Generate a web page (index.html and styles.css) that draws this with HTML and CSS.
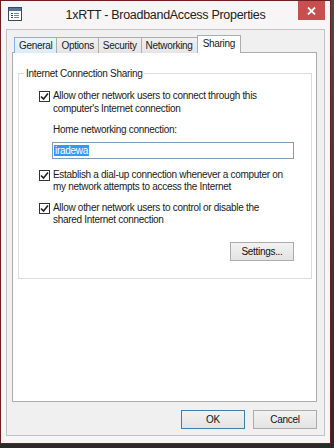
FILE: index.html
```
<!DOCTYPE html>
<html lang="en">
<head>
  <meta charset="UTF-8">
  <meta name="viewport" content="width=device-width, initial-scale=1.0">
  <title>1xRTT - BroadbandAccess Properties</title>
  <link rel="stylesheet" href="styles.css">
</head>
<body>
  <div class="window">
    <div class="titlebar">
      <svg class="app-icon" width="14" height="14" viewBox="0 0 14 14">
        <rect x="0.5" y="0.5" width="13" height="13" fill="#fff" stroke="#3b4a5c"/>
        <rect x="1" y="1" width="12" height="3" fill="#58769a"/>
        <rect x="3" y="6" width="2" height="1" fill="#3b4a5c"/>
        <rect x="6" y="6" width="5" height="1" fill="#7a8899"/>
        <rect x="3" y="8" width="2" height="1" fill="#3b4a5c"/>
        <rect x="6" y="8" width="5" height="1" fill="#7a8899"/>
        <rect x="3" y="10" width="2" height="1" fill="#3b4a5c"/>
        <rect x="6" y="10" width="5" height="1" fill="#7a8899"/>
      </svg>
      <div class="title">1xRTT - BroadbandAccess Properties</div>
      <div class="close">
        <svg width="9" height="8" viewBox="0 0 9 8">
          <path d="M1 0.5 L8 7.5 M8 0.5 L1 7.5" stroke="#fff" stroke-width="1.8"/>
        </svg>
      </div>
    </div>

    <div class="client">
      <div class="tabs">
        <div class="tab tab-hover">General</div>
        <div class="tab">Options</div>
        <div class="tab">Security</div>
        <div class="tab">Networking</div>
        <div class="tab tab-active">Sharing</div>
      </div>

      <div class="panel">
        <fieldset class="group">
          <legend>Internet Connection Sharing</legend>

          <div class="check-row">
            <span class="checkbox"><svg width="9" height="9" viewBox="0 0 9 9"><path d="M1 4.5 L3.5 7 L8 1.5" fill="none" stroke="#222" stroke-width="1.6"/></svg></span>
            <span class="check-text">Allow other network users to connect through this<br>computer's Internet connection</span>
          </div>

          <div class="field">
            <div class="field-label">Home networking connection:</div>
            <div class="text-input"><span class="selected">iradewa</span></div>
          </div>

          <div class="check-row">
            <span class="checkbox"><svg width="9" height="9" viewBox="0 0 9 9"><path d="M1 4.5 L3.5 7 L8 1.5" fill="none" stroke="#222" stroke-width="1.6"/></svg></span>
            <span class="check-text">Establish a dial-up connection whenever a computer on<br>my network attempts to access the Internet</span>
          </div>

          <div class="check-row check-row-tight">
            <span class="checkbox"><svg width="9" height="9" viewBox="0 0 9 9"><path d="M1 4.5 L3.5 7 L8 1.5" fill="none" stroke="#222" stroke-width="1.6"/></svg></span>
            <span class="check-text">Allow other network users to control or disable the<br>shared Internet connection</span>
          </div>

          <div class="group-actions">
            <button class="btn">Settings...</button>
          </div>
        </fieldset>
      </div>

      <div class="actions">
        <button class="btn btn-default">OK</button>
        <button class="btn">Cancel</button>
      </div>
    </div>
  </div>
</body>
</html>
```

FILE: styles.css
```
* {
  box-sizing: border-box;
}

body {
  margin: 0;
  width: 334px;
  height: 448px;
  background: linear-gradient(to bottom, #4a4a4a, #2a2a2a);
  font-family: "Liberation Sans", Arial, sans-serif;
  font-size: 10px;
  letter-spacing: -0.3px;
  color: #1a1a1a;
  overflow: hidden;
}

.window {
  width: 331px;
  height: 444px;
  border: 1px solid #6e1e1e;
  background: #f7f5f6;
  display: flex;
  flex-direction: column;
}

/* Title bar */
.titlebar {
  height: 28px;
  flex-shrink: 0;
  display: grid;
  grid-template-columns: 1fr auto 1fr;
  align-items: center;
}

.app-icon {
  margin: 0 0 2px 7px;
}

.title {
  font-size: 12.5px;
  letter-spacing: -0.3px;
  color: #222;
  padding-bottom: 1px;
}

.close {
  justify-self: end;
  align-self: start;
  width: 27px;
  height: 19px;
  margin-right: 5px;
  background: #c74f4f;
  display: flex;
  align-items: center;
  justify-content: center;
}

/* Client area */
.client {
  flex: 1;
  margin: 0 5px 7px 5px;
  border: 1px solid #c2c2c2;
  background: #f0f0f0;
  padding: 5px 7px 6px 5px;
  display: flex;
  flex-direction: column;
}

.tabs {
  display: flex;
  align-items: flex-end;
  height: 18px;
  padding-left: 2px;
  margin-bottom: -1px;
  position: relative;
  z-index: 1;
}

.tab {
  height: 16px;
  padding: 0 4px;
  border: 1px solid #adadad;
  border-bottom: none;
  background: linear-gradient(#f0f0f0, #e5e5e5);
  line-height: 15px;
  margin-right: -1px;
}

.tab-hover {
  background: linear-gradient(#ecf4fc, #dcecfc);
  border-color: #7eb4ea;
}

.tab-active {
  height: 18px;
  padding: 0 5px;
  background: #fff;
  line-height: 15px;
}

.panel {
  flex: 1;
  background: #fff;
  border: 1px solid #adadad;
  padding: 14px 4px 0 5px;
}

/* Group box */
.group {
  margin: 0;
  border: 1px solid #dcdcdc;
  padding: 0 17px 17px 20px;
}

.group legend {
  padding: 0 2px;
  margin-left: -15px;
  line-height: 13px;
}

.check-row {
  display: flex;
  align-items: flex-start;
  gap: 3px;
  margin-top: 10px;
  line-height: 12.5px;
}

.check-row-tight {
  margin-top: 8px;
}

.checkbox {
  width: 11px;
  height: 11px;
  border: 1px solid #333;
  background: #fff;
  margin-top: 1px;
  display: flex;
  align-items: center;
  justify-content: center;
  flex-shrink: 0;
}

.field {
  margin: 9px 0 0 14px;
}

.field-label {
  line-height: 12.5px;
}

.text-input {
  margin-top: 5px;
  margin-left: -1px;
  height: 17px;
  border: 1px solid #7f9db9;
  background: #fff;
  padding: 2px 1px;
}

.selected {
  display: inline-block;
  background: #3399ff;
  color: #fff;
  line-height: 11px;
  padding: 0 1px;
}

.group-actions {
  display: flex;
  justify-content: flex-end;
  margin-top: 15px;
}

/* Buttons */
.btn {
  width: 64px;
  height: 19px;
  border: 1px solid #acacac;
  background: linear-gradient(#f2f2f2, #e3e3e3);
  font-family: inherit;
  font-size: 10px;
  letter-spacing: -0.3px;
  color: #111;
  padding: 0;
}

.btn-default {
  border-color: #3c7fb1;
}

.actions {
  display: flex;
  justify-content: flex-end;
  gap: 8px;
  margin-top: 8px;
}
```
